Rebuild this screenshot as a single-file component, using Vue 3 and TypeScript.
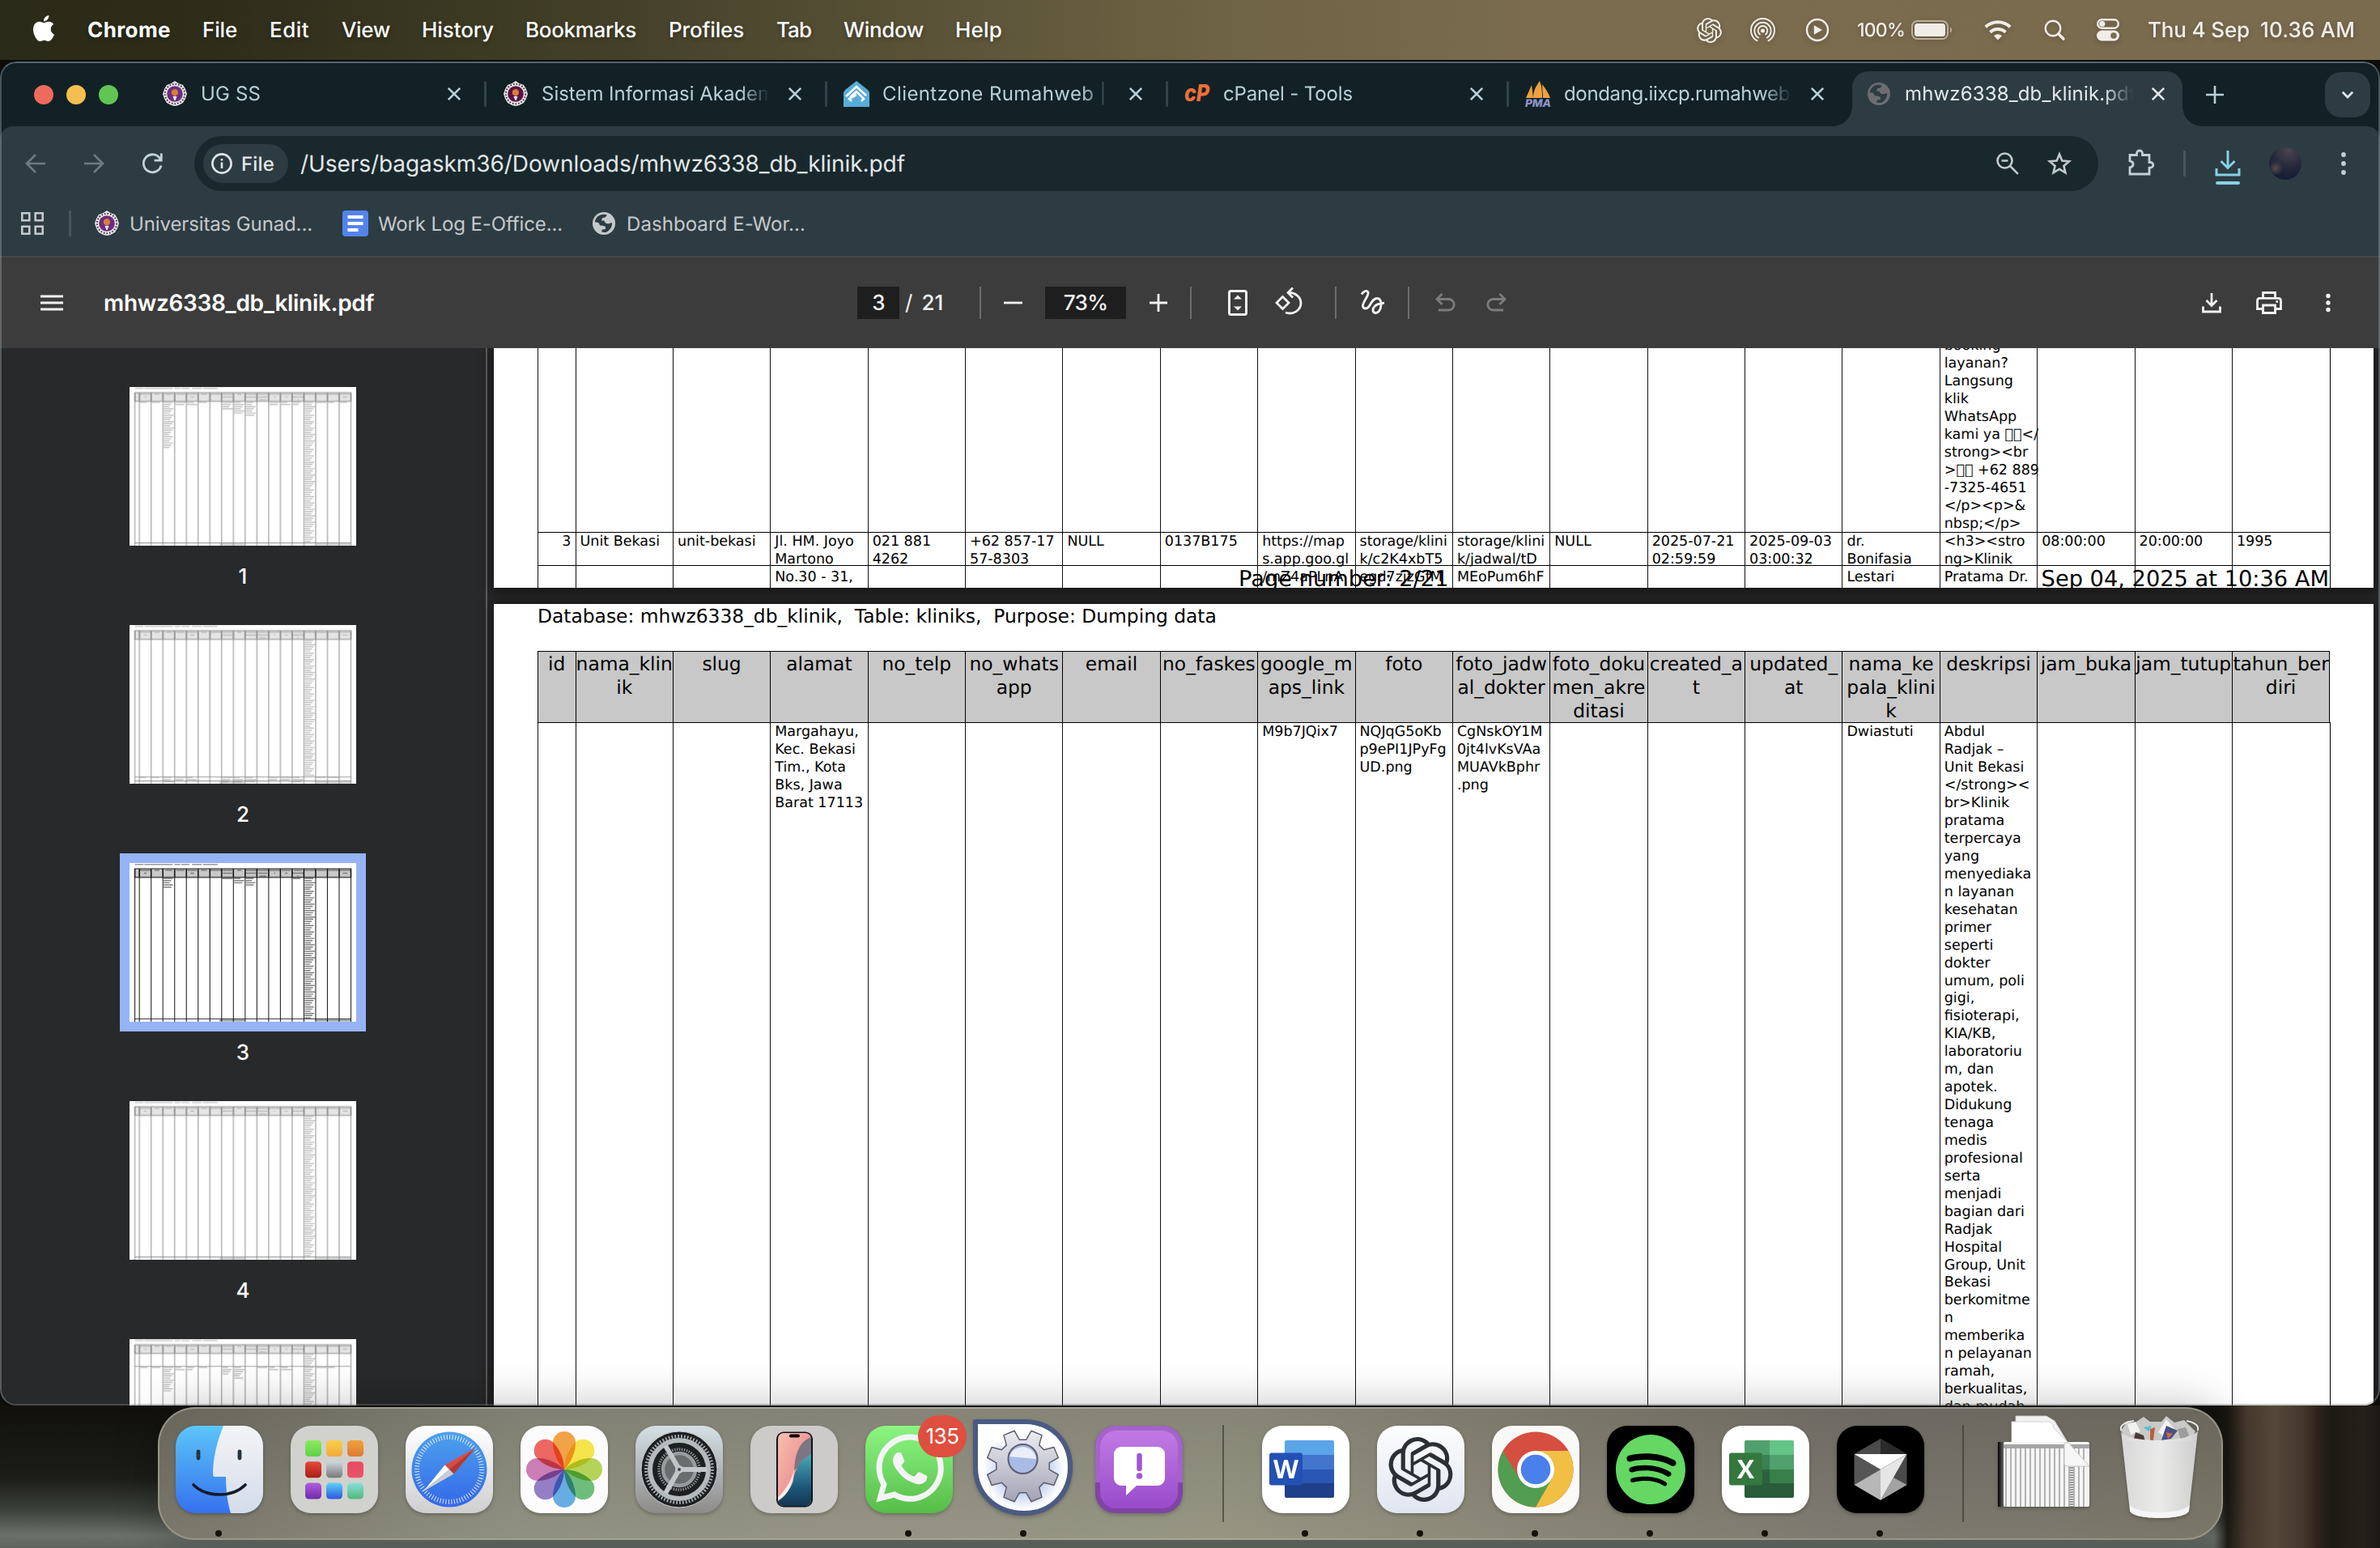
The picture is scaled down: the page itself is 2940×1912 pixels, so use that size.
<script setup lang="ts">
type FitEl = HTMLElement

// Stretches or tightens the tracking of a label so that it takes a given width.
const vFit = {
  mounted(el: FitEl, binding: { value: number }) {
    const n = (el.textContent ?? '').length
    const w = el.getBoundingClientRect().width
    if (n > 0) el.style.letterSpacing = `${((binding.value - w) / n).toFixed(3)}px`
  },
}

const menus = [
  { t: 'Chrome', cell: 142, w: 103 },
  { t: 'File', cell: 83, w: 43 },
  { t: 'Edit', cell: 89, w: 49 },
  { t: 'View', cell: 99, w: 60 },
  { t: 'History', cell: 128, w: 89 },
  { t: 'Bookmarks', cell: 177, w: 137 },
  { t: 'Profiles', cell: 133, w: 93 },
  { t: 'Tab', cell: 83, w: 43 },
  { t: 'Window', cell: 138, w: 99 },
  { t: 'Help', cell: 80, w: 58 },
]

const tabs = [
  { icon: 'ug', t: 'UG SS', w: 74 },
  { icon: 'ug', t: 'Sistem Informasi Akadem', w: 288 },
  { icon: 'rw', t: 'Clientzone Rumahweb | v', w: 298 },
  { icon: 'cp', t: 'cPanel - Tools', w: 160 },
  { icon: 'pma', t: 'dondang.iixcp.rumahweb', w: 279 },
  { icon: 'globe', t: 'mhwz6338_db_klinik.pdf', w: 286, active: true },
]

const bookmarks = [
  { icon: 'ug', t: 'Universitas Gunad...', w: 226, gap: 37 },
  { icon: 'doc', t: 'Work Log E-Office...', w: 228, gap: 35 },
  { icon: 'globe', t: 'Dashboard E-Wor...', w: 221, gap: 0 },
]

const caption = 'Database: mhwz6338_db_klinik,  Table: kliniks,  Purpose: Dumping data'

const headers: string[][] = [
  ['id'], ['nama_klin', 'ik'], ['slug'], ['alamat'], ['no_telp'], ['no_whats', 'app'], ['email'],
  ['no_faskes'], ['google_m', 'aps_link'], ['foto'], ['foto_jadw', 'al_dokter'],
  ['foto_doku', 'men_akre', 'ditasi'], ['created_a', 't'], ['updated_', 'at'],
  ['nama_ke', 'pala_klini', 'k'], ['deskripsi'], ['jam_buka'], ['jam_tutup'], ['tahun_ber', 'diri'],
]

const upperTail = [
  'booking', 'layanan?', 'Langsung', 'klik', 'WhatsApp', 'kami ya \uEEEE\uEEEE</', 'strong><br',
  '>\uEEEE\uEEEE +62 889', '-7325-4651', '</p><p>&', 'nbsp;</p>',
]

const bekasi: string[][] = [
  ['3'], ['Unit Bekasi'], ['unit-bekasi'], ['Jl. HM. Joyo', 'Martono', 'No.30 - 31,'],
  ['021 881', '4262'], ['+62 857-17', '57-8303'], ['NULL'], ['0137B175'],
  ['https://map', 's.app.goo.gl', '/mZ4aPLnA'], ['storage/klini', 'k/c2K4xbT5', 'egd7zjzGfM'],
  ['storage/klini', 'k/jadwal/tD', 'MEoPum6hF'], ['NULL'], ['2025-07-21', '02:59:59'],
  ['2025-09-03', '03:00:32'], ['dr.', 'Bonifasia', 'Lestari'], ['<h3><stro', 'ng>Klinik', 'Pratama Dr.'],
  ['08:00:00'], ['20:00:00'], ['1995'],
]

const story = [
  'Abdul', 'Radjak –', 'Unit Bekasi', '</strong><', 'br>Klinik', 'pratama', 'terpercaya', 'yang',
  'menyediaka', 'n layanan', 'kesehatan', 'primer', 'seperti', 'dokter', 'umum, poli', 'gigi,',
  'fisioterapi,', 'KIA/KB,', 'laboratoriu', 'm, dan', 'apotek.', 'Didukung', 'tenaga', 'medis',
  'profesional', 'serta', 'menjadi', 'bagian dari', 'Radjak', 'Hospital', 'Group, Unit', 'Bekasi',
  'berkomitme', 'n', 'memberika', 'n pelayanan', 'ramah,', 'berkualitas,', 'dan mudah',
]

const rest: string[][] = headers.map(() => [] as string[])
rest[3] = ['Margahayu,', 'Kec. Bekasi', 'Tim., Kota', 'Bks, Jawa', 'Barat 17113']
rest[8] = ['M9b7JQix7']
rest[9] = ['NQJqG5oKb', 'p9ePI1JPyFg', 'UD.png']
rest[10] = ['CgNskOY1M', '0jt4lvKsVAa', 'MUAVkBphr', '.png']
rest[14] = ['Dwiastuti']
rest[15] = story

// Horizontal positions of the column rules on a page.
const rules = [54.5, ...Array.from({ length: 19 }, (_, i) => 101 + i * 120.39)]

// Each thumbnail: extent of word blocks per column, in text lines.
const thumbs = [
  { n: 1, blocks: [[1, 0, 1], [2, 0, 1], [3, 0, 22], [4, 0, 2], [5, 0, 2], [6, 0, 1], [8, 0, 4], [9, 0, 6], [10, 0, 7], [12, 0, 2], [13, 0, 2], [14, 0, 2], [15, 0, 66], [16, 0, 1], [17, 0, 1], [18, 0, 1]], lines: [1596] },
  { n: 2, blocks: [[15, 0, 64], [1, 64, 1], [2, 64, 1], [3, 64, 3], [4, 64, 2], [5, 64, 2], [8, 64, 3], [9, 64, 3], [10, 64, 3], [12, 64, 2], [13, 64, 2], [14, 64, 3], [16, 64, 1], [17, 64, 1]], lines: [1556, 1596] },
  { n: 3, blocks: [[3, 0, 5], [8, 0, 1], [9, 0, 3], [10, 0, 4], [14, 0, 1], [15, 0, 66]], lines: [1596] },
  { n: 4, blocks: [[15, 0, 66]], lines: [1596] },
  { n: 5, blocks: [[15, 0, 66], [1, 6, 1], [2, 6, 1], [3, 6, 12], [4, 6, 2], [5, 6, 2], [6, 6, 1], [8, 6, 4], [9, 6, 6], [11, 6, 1], [12, 6, 2], [13, 6, 2], [16, 6, 1], [17, 6, 1]], lines: [278, 1596] },
]

function dashes(blocks: number[][]): string {
  let d = ''
  for (const [c, from, count] of blocks) {
    for (let i = from; i < from + count; i++) {
      const len = 56 + ((i * 37 + c * 13) % 54)
      d += `M${rules[c] + 7} ${158 + i * 21.93}h${len}`
    }
  }
  return d
}

function gear(cx: number, cy: number, ro: number, ri: number, n: number): string {
  const pts: string[] = []
  const step = (Math.PI * 2) / n
  for (let i = 0; i < n; i++) {
    const a = (i + 0.5) * step
    for (const [f, r] of [[-0.34, ri], [-0.2, ro], [0.2, ro], [0.34, ri]]) {
      pts.push(`${(cx + Math.sin(a + f * step) * r).toFixed(1)} ${(cy - Math.cos(a + f * step) * r).toFixed(1)}`)
    }
  }
  return `M${pts.join('L')}Z`
}

const petals = ['#f19a37', '#f5e13c', '#aed04a', '#63b872', '#5aa5e0', '#8b74c2', '#c773b0', '#ec5b54']
const pads = ['#8ceb5f,#5fd044', '#f8cf4b,#f0ab3c', '#eda23b,#e07a35', '#e44a3b,#a91f17', '#ccd8df,#777777', '#e94a62,#ea5568', '#b15ce0,#6f2ba8', '#5cd0fa,#2c57dc', '#86e0d8,#55b77a']

const openai =
  'M22.2819 9.8211a5.9847 5.9847 0 0 0-.5157-4.9108 6.0462 6.0462 0 0 0-6.5098-2.9A6.0651 6.0651 0 0 0 4.9807 4.1818a5.9847 5.9847 0 0 0-3.9977 2.9 6.0462 6.0462 0 0 0 .7427 7.0966 5.98 5.98 0 0 0 .511 4.9107 6.051 6.051 0 0 0 6.5146 2.9001A5.9847 5.9847 0 0 0 13.2599 24a6.0557 6.0557 0 0 0 5.7718-4.2058 5.9894 5.9894 0 0 0 3.9977-2.9001 6.0557 6.0557 0 0 0-.7475-7.0729zm-9.022 12.6081a4.4755 4.4755 0 0 1-2.8764-1.0408l.1419-.0804 4.7783-2.7582a.7948.7948 0 0 0 .3927-.6813v-6.7369l2.02 1.1686a.071.071 0 0 1 .038.052v5.5826a4.504 4.504 0 0 1-4.4945 4.4944zm-9.6607-4.1254a4.4708 4.4708 0 0 1-.5346-3.0137l.142.0852 4.783 2.7582a.7712.7712 0 0 0 .7806 0l5.8428-3.3685v2.3324a.0804.0804 0 0 1-.0332.0615L9.74 19.9502a4.4992 4.4992 0 0 1-6.1408-1.6464zM2.3408 7.8956a4.485 4.485 0 0 1 2.3655-1.9728V11.6a.7664.7664 0 0 0 .3879.6765l5.8144 3.3543-2.0201 1.1685a.0757.0757 0 0 1-.071 0l-4.8303-2.7865A4.504 4.504 0 0 1 2.3408 7.872zm16.5963 3.8558L13.1038 8.364 15.1192 7.2a.0757.0757 0 0 1 .071 0l4.8303 2.7913a4.4944 4.4944 0 0 1-.6765 8.1042v-5.6772a.79.79 0 0 0-.407-.667zm2.0107-3.0231l-.142-.0852-4.7735-2.7818a.7759.7759 0 0 0-.7854 0L9.409 9.2297V6.8974a.0662.0662 0 0 1 .0284-.0615l4.8303-2.7866a4.4992 4.4992 0 0 1 6.6802 4.66zM8.3065 12.863l-2.02-1.1638a.0804.0804 0 0 1-.038-.0567V6.0742a4.4992 4.4992 0 0 1 7.3757-3.4537l-.142.0805L8.704 5.459a.7948.7948 0 0 0-.3927.6813zm1.0976-2.3654l2.602-1.4998 2.6069 1.4998v2.9994l-2.5974 1.4997-2.6067-1.4997Z'

const dock = [
  { k: 'finder', dot: true }, { k: 'pads' }, { k: 'safari' }, { k: 'photos' }, { k: 'settings' },
  { k: 'phone' }, { k: 'whatsapp', dot: true }, { k: 'gear', dot: true }, { k: 'feedback' },
  { k: 'sep' },
  { k: 'word', dot: true }, { k: 'gpt', dot: true }, { k: 'chrome', dot: true }, { k: 'spotify', dot: true },
  { k: 'excel', dot: true }, { k: 'cursor', dot: true },
  { k: 'sep' },
  { k: 'stack' }, { k: 'trash' },
] as { k: string; dot?: boolean }[]
</script>

<template>
  <div class="desktop">
    <header class="menubar">
      <svg class="apple" viewBox="0 0 24 24"><path fill="#fff" d="M12.152 6.896c-.948 0-2.415-1.078-3.96-1.04-2.04.027-3.91 1.183-4.961 3.014-2.117 3.675-.546 9.103 1.519 12.09 1.013 1.454 2.208 3.09 3.792 3.039 1.52-.065 2.09-.987 3.935-.987 1.831 0 2.35.987 3.96.948 1.637-.026 2.676-1.48 3.676-2.948 1.156-1.688 1.636-3.325 1.662-3.415-.039-.013-3.182-1.221-3.22-4.857-.026-3.04 2.48-4.494 2.597-4.559-1.429-2.09-3.623-2.324-4.39-2.376-2-.156-3.675 1.09-4.61 1.09zM15.53 3.83c.843-1.012 1.4-2.427 1.245-3.83-1.207.052-2.662.805-3.532 1.818-.78.896-1.454 2.338-1.273 3.714 1.338.104 2.715-.688 3.559-1.701" /></svg>
      <nav class="menus">
        <div v-for="m in menus" :key="m.t" class="menu" :style="{ width: m.cell + 'px' }"><span v-fit="m.w">{{ m.t }}</span></div>
      </nav>
      <div class="status">
        <svg class="s-gpt" viewBox="0 0 24 24"><path :d="openai" fill="#f0ede9" /></svg>
        <svg class="s-drop" viewBox="0 0 32 32" fill="none" stroke="#f0ede9" stroke-width="2">
          <path d="M9.5 29.5a15 15 0 1 1 13 0M11.2 25.8a10.5 10.5 0 1 1 9.6 0M13 21.5a6 6 0 1 1 6 0" /><circle cx="16" cy="16.5" r="2.6" fill="#f0ede9" stroke="none" />
        </svg>
        <svg class="s-play" viewBox="0 0 30 30"><circle cx="15" cy="15" r="13" fill="none" stroke="#f0ede9" stroke-width="2.4" /><path d="M10.8 9.2 21 15l-10.2 5.8z" fill="#f0ede9" /></svg>
        <span v-fit="59" class="pct">100%</span>
        <svg class="s-bat" viewBox="0 0 52 24"><rect x="1" y="1" width="44" height="22" rx="6.5" fill="none" stroke="#b9b09f" stroke-width="2" /><rect x="4" y="4" width="38" height="16" rx="3.5" fill="#f0ede9" /><path d="M48 8.500c2.800 1 2.800 6 0 7z" fill="#b9b09f" /></svg>
        <svg class="s-wifi" viewBox="0 0 34 26" fill="none" stroke="#f0ede9"><path d="M1.800 9.300a22 22 0 0 1 30.400 0" stroke-width="4" /><path d="M7.500 15.800a14 14 0 0 1 19 0" stroke-width="4" /><path d="M17 25.500l-5-5.200a7.300 7.300 0 0 1 10 0z" fill="#f0ede9" stroke="none" /></svg>
        <svg class="s-find" viewBox="0 0 26 26" fill="none" stroke="#f0ede9"><circle cx="11" cy="11" r="9.300" stroke-width="2.400" /><path d="M17.800 17.800 24 24" stroke-width="3.400" stroke-linecap="round" /></svg>
        <svg class="s-cc" viewBox="0 0 28 28"><rect x="1.200" y="1.200" width="25.600" height="10.600" rx="5.300" fill="none" stroke="#f0ede9" stroke-width="2.400" /><circle cx="6.800" cy="6.500" r="3.600" fill="#f0ede9" /><rect x="0" y="14.500" width="28" height="13" rx="6.500" fill="#f0ede9" /><circle cx="21" cy="21" r="3.800" fill="#7b6c4f" /></svg>
        <span v-fit="126" class="date">Thu 4 Sep</span>
        <span v-fit="117" class="clock">10.36 AM</span>
      </div>
    </header>

    <main class="window">
      <div class="strip">
        <div class="lights"><i class="red" /><i class="amber" /><i class="green" /></div>
        <div v-for="(t, i) in tabs" :key="i" class="tab" :class="{ active: t.active, plainEnd: i === 4 }">
          <div v-if="t.active" class="tabshape" />
          <span class="fav">
            <svg v-if="t.icon === 'ug'" viewBox="0 0 32 32"><path d="M16 0l4.500 3 5.500 2 3 5 2 6-2 6-3 5-5.500 3L16 31l-4.500-1L6 27l-3-5-2-6 2-6 3-5 5.500-2z" fill="#e9e4e6" /><circle cx="16" cy="16" r="12.200" fill="none" stroke="#44343f" stroke-width="2" stroke-dasharray="1.600 2" /><circle cx="16" cy="16" r="9.800" :fill="i === 1 ? '#5b1046' : '#6a2c82'" /><path d="M12.500 17c-2-4 .5-7 3.500-7s5 3 3.500 6.500l-3 2.500z" fill="#d97f35" /><path d="M13.500 19h5l-1.800 5h-1.400z" fill="#f3eef2" /></svg>
            <svg v-else-if="t.icon === 'rw'" viewBox="0 0 32 32"><path d="M16 0l14 11 2 3v18H0V14l2-3z" fill="#57acd9" /><path d="M3 19 16 7l12 11M8 20l8-7 9 9-3 3M10 25l-3-3 9-5" fill="none" stroke="#fff" stroke-width="2.600" /></svg>
            <svg v-else-if="t.icon === 'cp'" viewBox="0 0 32 32"><text x="0" y="25" textLength="31" lengthAdjust="spacingAndGlyphs" class="cp">cP</text></svg>
            <svg v-else-if="t.icon === 'pma'" viewBox="0 0 32 32"><path d="M8 5 1 21h9zM18 0c-6 8-8 14-8 21h11c0-7 0-14-3-21zM21 4c4 5 8 11 10 17h-9z" fill="#eda03f" /><text x="0" y="32" textLength="32" lengthAdjust="spacingAndGlyphs" class="pma">PMA</text></svg>
            <svg v-else viewBox="0 0 28 28" class="gl"><circle cx="14" cy="14" r="14" fill="#6b6d70" /><path d="M2.800 12.500C3.500 6.500 8 2.800 14 2.800l4 .8-2 2.600-4 1-1 3.200h3l2 3 3 1 5-1.500c.8 5-3 10.500-8 12l-5-.4 1-3 4-.5v-3l-4-1.500h-3l-1-2.500-2-1.500z" fill="#2d3c43" /></svg>
          </span>
          <span class="label"><span v-fit="t.w">{{ t.t }}</span></span>
          <svg class="x" viewBox="0 0 18 18"><path d="M1.800 1.800l14.400 14.400M16.200 1.800 1.800 16.200" stroke-width="2.600" fill="none" /></svg>
        </div>
        <svg class="plus" viewBox="0 0 22 22"><path d="M11 0v22M0 11h22" stroke="#b8d0d8" stroke-width="2.600" /></svg>
        <div class="more"><svg viewBox="0 0 18 12"><path d="M2 2l7 7 7-7" fill="none" stroke="#dfe7ea" stroke-width="3" /></svg></div>
      </div>

      <div class="chrome">
        <div class="nav">
          <svg class="n-back" viewBox="0 0 28 28" fill="none" stroke="#6d7c83" stroke-width="2.600"><path d="M26 14H3M14 3 3 14l11 11" /></svg>
          <svg class="n-fwd" viewBox="0 0 28 28" fill="none" stroke="#6d7c83" stroke-width="2.600"><path d="M2 14h23M14 3l11 11-11 11" /></svg>
          <svg class="n-re" viewBox="0 0 28 28" fill="none" stroke="#c1d3d9" stroke-width="2.800"><path d="M24 8.500A11 11 0 1 0 25 16.500M25.300 1.500v8.700h-8.700" /></svg>
          <div class="omni">
            <div class="chip">
              <svg viewBox="0 0 26 26"><circle cx="13" cy="13" r="11.600" fill="none" stroke="#dfe5e8" stroke-width="2.600" /><path d="M13 11.500v7.500M13 7v2.600" stroke="#dfe5e8" stroke-width="2.600" /></svg>
              <span v-fit="41">File</span>
            </div>
            <span v-fit="747" class="url">/Users/bagaskm36/Downloads/mhwz6338_db_klinik.pdf</span>
            <svg class="o-zoom" viewBox="0 0 28 28" fill="none" stroke="#c3c8cc" stroke-width="2.600"><circle cx="10.500" cy="10.500" r="9" /><path d="M6.500 10.500h8M17 17l9.800 9.800" /></svg>
            <svg class="o-star" viewBox="0 0 30 30" fill="none" stroke="#c3c8cc" stroke-width="2.600"><path d="M15 3.500l3.300 8 8.700.700-6.600 5.700 2 8.400-7.400-4.500-7.400 4.500 2-8.400L3 12.200l8.700-.700z" /></svg>
          </div>
          <svg class="n-ext" viewBox="0 0 34 34" fill="none" stroke="#c1d0d6" stroke-width="2.800"><path d="M3 8.500h8.500v-2a3.500 3.500 0 0 1 7 0v2H27v9h1.500a3.300 3.300 0 0 1 0 6.600H27V32H3v-8.200c5.500-1 5.500-7 0-8z" /></svg>
          <i class="n-sep" />
          <svg class="n-dl" viewBox="0 0 32 42" fill="none" stroke="#86d1e4" stroke-width="3"><path d="M16 0v21M7.500 13 16 21.500 24.500 13M2 22v8h28v-8" /><path d="M3 40h26" stroke-width="4" stroke-linecap="round" /></svg>
          <i class="avatar" />
          <svg class="n-dots" viewBox="0 0 6 28" fill="#c1d0d6"><circle cx="3" cy="3" r="2.900" /><circle cx="3" cy="14" r="2.900" /><circle cx="3" cy="25" r="2.900" /></svg>
        </div>
        <div class="marks">
          <svg class="apps" viewBox="0 0 28 28" fill="none" stroke="#c5c9cc" stroke-width="2.600"><path d="M1.300 1.300h9v9h-9zM17.700 1.300h9v9h-9zM1.300 17.700h9v9h-9zM17.700 17.700h9v9h-9z" /></svg>
          <i class="m-sep" />
          <div v-for="b in bookmarks" :key="b.t" class="mark" :style="{ marginRight: b.gap + 'px' }">
            <svg v-if="b.icon === 'ug'" viewBox="0 0 32 32"><path d="M16 0l4.500 3 5.500 2 3 5 2 6-2 6-3 5-5.500 3L16 31l-4.500-1L6 27l-3-5-2-6 2-6 3-5 5.500-2z" fill="#e9e4e6" /><circle cx="16" cy="16" r="12.200" fill="none" stroke="#44343f" stroke-width="2" stroke-dasharray="1.600 2" /><circle cx="16" cy="16" r="9.800" fill="#6a2c82" /><path d="M12.500 17c-2-4 .5-7 3.500-7s5 3 3.500 6.500l-3 2.500z" fill="#d97f35" /><path d="M13.500 19h5l-1.800 5h-1.400z" fill="#f3eef2" /></svg>
            <svg v-else-if="b.icon === 'doc'" viewBox="0 0 32 32"><rect width="32" height="32" rx="4" fill="#5383ec" /><path d="M6.500 8h19M6.500 16h19M6.500 24h13" stroke="#fff" stroke-width="4" /></svg>
            <svg v-else viewBox="-2 -2 32 32"><circle cx="14" cy="14" r="14" fill="#c5c9cc" /><path d="M2.800 12.500C3.500 6.500 8 2.800 14 2.800l4 .8-2 2.600-4 1-1 3.200h3l2 3 3 1 5-1.500c.8 5-3 10.500-8 12l-5-.4 1-3 4-.5v-3l-4-1.500h-3l-1-2.500-2-1.500z" fill="#2d3c43" /></svg>
            <span v-fit="b.w">{{ b.t }}</span>
          </div>
        </div>
      </div>

      <div class="pdfbar">
        <div class="lead">
          <svg viewBox="0 0 28 20"><path d="M0 2h28M0 10h28M0 18h28" stroke="#f1f1f1" stroke-width="2.800" /></svg>
          <span v-fit="334">mhwz6338_db_klinik.pdf</span>
        </div>
        <span class="field page">3</span>
        <span class="of">/<b>21</b></span>
        <i class="vr" />
        <svg class="step" viewBox="0 0 79 48"><path d="M28 24h23" stroke="#f1f1f1" stroke-width="2.800" /></svg>
        <span class="field zoom">73%</span>
        <svg class="step" viewBox="0 0 79 48"><path d="M29 24h22M40 13v22" stroke="#f1f1f1" stroke-width="2.800" /></svg>
        <i class="vr" />
        <svg class="tool fit" viewBox="0 0 48 48"><rect x="13.500" y="9.500" width="21" height="29" rx="2" fill="none" stroke="#f1f1f1" stroke-width="3" /><path d="M19 19.500h10l-5-5zM19 28.500h10l-5 5z" fill="#f1f1f1" /></svg>
        <svg class="tool rot" viewBox="0 0 48 48" fill="none" stroke="#f1f1f1" stroke-width="2.800"><path d="M16.500 16.500 24 24l-7.500 7.500L9 24zM23.500 11.500c8-.500 15.500 5 15.500 13s-9 15-19 11.500M29 5.500l-6 6 6 6" /></svg>
        <i class="vr v2" />
        <svg class="tool pen" viewBox="0 0 48 48" fill="none" stroke="#f1f1f1" stroke-width="2.900"><path d="M11 13.500c2-4 7-5.500 8-2.500 1.500 4-7 12-6.500 17 .5 4 5.500 4 8 0 3-5 5-9.500 9.500-9.500 4 0 5.500 4 5 8.500-.5 6-3.500 10-7 9.500-3.500-.5-4-4.500-1.500-7.500s6-4.500 12.500-4.700" /></svg>
        <i class="vr v3" />
        <svg class="tool un" viewBox="0 0 48 48" fill="none" stroke="#7c7c7c" stroke-width="2.800"><path d="M16 33h12.500a6.500 6.500 0 0 0 0-13.500H14M20.500 13 14 19.500l6.500 6.500" /></svg>
        <svg class="tool re" viewBox="0 0 48 48" fill="none" stroke="#7c7c7c" stroke-width="2.800"><path d="M32 33H19.500a6.500 6.500 0 0 1 0-13.500H34M27.500 13l6.500 6.500-6.500 6.500" /></svg>
        <svg class="tool dl" viewBox="0 0 48 48" fill="none" stroke="#f1f1f1" stroke-width="2.800"><path d="M24 12v15M17.500 21l6.500 6.500 6.500-6.500M13.500 28.500v6.500h21v-6.500" /></svg>
        <svg class="tool pr" viewBox="0 0 48 48" fill="none" stroke="#f1f1f1" stroke-width="2.800"><path d="M16.500 18v-6.500h15V18M16 31.500h-6.500V21.500c0-2 1-3.200 3-3.200h23c2 0 3 1.200 3 3.200v10H32M16.500 27h15v9.500h-15z" /><path d="M32.500 22.500h2.600" /></svg>
        <svg class="tool dt" viewBox="0 0 48 48" fill="#f1f1f1"><circle cx="24" cy="15.500" r="2.700" /><circle cx="24" cy="24" r="2.700" /><circle cx="24" cy="32.500" r="2.700" /></svg>
      </div>

      <div class="body">
        <aside class="side">
          <div v-for="t in thumbs" :key="t.n" class="thumb" :class="{ on: t.n === 3 }">
            <div class="frame">
              <svg viewBox="0 0 2322 1625">
                <rect width="2322" height="1625" fill="#fff" />
                <g :opacity="t.n === 3 ? 1 : 0.5">
                  <rect x="54.500" y="58" width="2213.500" height="88" fill="#c8c8c8" />
                  <path d="M54 14h90M152 14h290M460 14h60M530 14h86M640 14h100M752 14h150" stroke="#000" stroke-width="13" opacity=".4" />
                  <path v-for="(h, c) in headers.slice(1)" :key="c" :d="h.map((s, k) => `M${rules[c + 1] + 60 - s.length * 6} ${74 + k * 29}h${s.length * 12}`).join('')" stroke="#000" stroke-width="12" opacity=".38" />
                  <path :d="rules.map((x) => `M${x} 58V1625`).join('')" stroke="#000" stroke-width="9" opacity=".85" />
                  <path :d="rules.map((x) => `M${x} 58V146`).join('') + 'M50 58H2272M50 146H2272'" stroke="#000" stroke-width="14" opacity=".6" />
                  <path :d="t.lines.map((y) => `M54 ${y}H2268`).join('')" stroke="#000" stroke-width="9" opacity=".75" />
                  <path :d="dashes(t.blocks)" stroke="#000" stroke-width="12" opacity=".5" />
                  <path d="M920 1612h260M1910 1612h356" stroke="#000" stroke-width="18" opacity=".4" />
                </g>
              </svg>
            </div>
            <span class="num">{{ t.n }}</span>
          </div>
        </aside>
        <div class="pages">
          <section class="sheet upper">
            <div class="grid">
              <div v-for="(_, c) in headers" :key="c" class="cell tail"><template v-if="c === 15"><div v-for="l in upperTail" :key="l" class="ln">{{ l }}</div></template></div>
            </div>
            <div class="grid first">
              <div v-for="(cell, c) in bekasi" :key="c" class="cell" :class="{ right: c === 0 }">{{ cell.join('\n') }}</div>
            </div>
            <div class="grid cont">
              <div v-for="(_, c) in headers" :key="c" class="cell" />
            </div>
            <span class="foot mid">Page number: 2/21</span>
            <span class="foot end">Sep 04, 2025 at 10:36 AM</span>
          </section>
          <section class="sheet lower">
            <p class="caption">{{ caption }}</p>
            <div class="grid head">
              <div v-for="(h, c) in headers" :key="c" class="cell">{{ h.join('\n') }}</div>
            </div>
            <div class="grid long">
              <div v-for="(cell, c) in rest" :key="c" class="cell">{{ cell.join('\n') }}</div>
            </div>
          </section>
        </div>
      </div>
    </main>

    <footer class="dock">
      <template v-for="(d, i) in dock" :key="i">
        <i v-if="d.k === 'sep'" class="dsep" />
        <div v-else class="app" :class="{ running: d.dot }">
          <svg v-if="d.k === 'finder'" viewBox="0 0 108 108">
            <defs><linearGradient id="fa" x2="0" y2="1"><stop stop-color="#5cc5f8" /><stop offset="1" stop-color="#3571ef" /></linearGradient><linearGradient id="fb" x2="0" y2="1"><stop stop-color="#f4f4f6" /><stop offset="1" stop-color="#d3dcea" /></linearGradient><clipPath id="rr"><rect width="108" height="108" rx="25" /></clipPath></defs>
            <g clip-path="url(#rr)"><rect width="108" height="108" fill="url(#fa)" /><path d="M59 0C50 22 46 42 46 60q0 3 3 3h13c0 16 2 32 6 45h40V0z" fill="url(#fb)" /></g>
            <path d="M28 32v8M79 32v8" stroke="#26343f" stroke-width="4.800" stroke-linecap="round" /><path d="M22 73c16 16 48 16 64 0" fill="none" stroke="#141c2c" stroke-width="3.600" stroke-linecap="round" />
          </svg>
          <svg v-else-if="d.k === 'pads'" viewBox="0 0 108 108">
            <rect width="108" height="108" rx="25" fill="#d1d1ce" />
            <template v-for="(p, k) in pads" :key="k">
              <linearGradient :id="'pad' + k" x2="0" y2="1"><stop :stop-color="p.split(',')[0]" /><stop offset="1" :stop-color="p.split(',')[1]" /></linearGradient>
              <rect :x="18 + (k % 3) * 26" :y="18 + Math.floor(k / 3) * 26.300" width="20" height="20" rx="4.500" :fill="`url(#pad${k})`" />
            </template>
          </svg>
          <svg v-else-if="d.k === 'safari'" viewBox="0 0 108 108">
            <defs><linearGradient id="sf" x2="0" y2="1"><stop stop-color="#fff" /><stop offset="1" stop-color="#cfcfcf" /></linearGradient><linearGradient id="sg" x2="0" y2="1"><stop stop-color="#4da1ec" /><stop offset="1" stop-color="#3468ea" /></linearGradient></defs>
            <rect width="108" height="108" rx="25" fill="url(#sf)" /><circle cx="54" cy="54" r="46.500" fill="url(#sg)" />
            <circle cx="54" cy="54" r="40" fill="none" stroke="#fff" stroke-width="6" stroke-dasharray="1 2.490" opacity=".85" />
            <path d="M87 27 48.500 48.500 54 54z" fill="#dd4a3e" /><path d="M87 27 59.500 59.500 54 54z" fill="#b33a31" /><path d="M22 81 48.500 48.500 54 54z" fill="#fff" /><path d="M22 81 59.500 59.500 54 54z" fill="#c9ced6" />
          </svg>
          <svg v-else-if="d.k === 'photos'" viewBox="0 0 108 108">
            <rect width="108" height="108" rx="25" fill="#fcfcfc" />
            <g class="flower"><path v-for="(c, k) in petals" :key="k" d="M54 54C46 46 40 33 40 21a14 14 0 0 1 28 0C68 33 62 46 54 54z" :fill="c" :transform="`rotate(${k * 45} 54 54)`" class="petal" /></g>
          </svg>
          <svg v-else-if="d.k === 'settings'" viewBox="0 0 108 108">
            <defs><linearGradient id="st" x2="0" y2="1"><stop stop-color="#d5e0e6" /><stop offset="1" stop-color="#8d8b89" /></linearGradient></defs>
            <rect width="108" height="108" rx="25" fill="url(#st)" /><circle cx="54" cy="54" r="47" fill="#1d1f20" />
            <circle cx="54" cy="54" r="41" fill="none" stroke="#a7adb0" stroke-width="4" stroke-dasharray="1.800 2.100" /><circle cx="54" cy="54" r="36" fill="none" stroke="#b5babd" stroke-width="6" />
            <circle cx="54" cy="54" r="25" fill="none" stroke="#8c9092" stroke-width="3.500" stroke-dasharray="1.500 1.500" /><circle cx="54" cy="54" r="20" fill="#6a6d6e" stroke="#989c9e" stroke-width="4.500" />
            <path d="M54 54h34M54 54 37 24.500M54 54 37 83.500" stroke="#c2c6c9" stroke-width="6" /><circle cx="54" cy="54" r="5" fill="#c2c6c9" /><circle cx="54" cy="54" r="2" fill="#44474a" />
            <circle cx="54" cy="54" r="47" fill="none" stroke="#c9cfd2" stroke-width="1" />
          </svg>
          <svg v-else-if="d.k === 'phone'" viewBox="0 0 108 108">
            <defs><linearGradient id="pa" x2="1" y2="1"><stop stop-color="#f7c0b0" /><stop offset=".5" stop-color="#ef9a98" /><stop offset="1" stop-color="#fbe6e2" /></linearGradient><linearGradient id="pb" x2="0" y2="1"><stop stop-color="#4ba8b8" /><stop offset=".6" stop-color="#1d5a7c" /><stop offset="1" stop-color="#12324c" /></linearGradient><clipPath id="pc"><rect x="34" y="9" width="41" height="90" rx="7" /></clipPath></defs>
            <rect width="108" height="108" rx="25" fill="#cccbc9" /><rect x="32" y="7.500" width="45" height="93" rx="9" fill="#101316" />
            <g clip-path="url(#pc)"><rect x="34" y="9" width="41" height="90" fill="url(#pa)" /><path d="M75 14C60 20 55 35 54 55l21-16z" fill="#7b7584" /><path d="M75 35C62 42 54 55 53 68 50 78 40 90 34 91v10h41z" fill="url(#pb)" /><path d="M54 52c-2 14-10 26-20 37v4c14-9 19-22 20-41z" fill="#fff" opacity=".8" /></g>
            <rect x="48" y="10.500" width="13" height="4" rx="2" fill="#000" />
          </svg>
          <template v-else-if="d.k === 'whatsapp'">
            <svg viewBox="0 0 108 108">
              <defs><linearGradient id="wa" x2="0" y2="1"><stop stop-color="#8cf582" /><stop offset="1" stop-color="#57bd49" /></linearGradient></defs>
              <rect width="108" height="108" rx="25" fill="url(#wa)" /><g transform="translate(13 10.500) scale(3.500)"><path fill="#f4f4f6" d="M17.472 14.382c-.297-.149-1.758-.867-2.030-.967-.273-.099-.471-.148-.670.150-.197.297-.767.966-.940 1.164-.173.199-.347.223-.644.075-.297-.150-1.255-.463-2.390-1.475-.883-.788-1.480-1.761-1.653-2.059-.173-.297-.018-.458.130-.606.134-.133.298-.347.446-.520.149-.174.198-.298.298-.497.099-.198.050-.371-.025-.520-.075-.149-.669-1.612-.916-2.207-.242-.579-.487-.500-.669-.510-.173-.008-.371-.010-.570-.010-.198 0-.520.074-.792.372-.272.297-1.040 1.016-1.040 2.479 0 1.462 1.065 2.875 1.213 3.074.149.198 2.096 3.200 5.077 4.487.709.306 1.262.489 1.694.625.712.227 1.360.195 1.871.118.571-.085 1.758-.719 2.006-1.413.248-.694.248-1.289.173-1.413-.074-.124-.272-.198-.570-.347m-5.421 7.403h-.004a9.870 9.870 0 01-5.031-1.378l-.361-.214-3.741.982.998-3.648-.235-.374a9.860 9.860 0 01-1.510-5.260c.001-5.450 4.436-9.884 9.888-9.884 2.640 0 5.122 1.030 6.988 2.898a9.825 9.825 0 012.893 6.994c-.003 5.450-4.437 9.884-9.885 9.884m8.413-18.297A11.815 11.815 0 0012.050 0C5.495 0 .160 5.335.157 11.892c0 2.096.547 4.142 1.588 5.945L.057 24l6.305-1.654a11.882 11.882 0 005.683 1.448h.005c6.554 0 11.890-5.335 11.893-11.893a11.821 11.821 0 00-3.480-8.413z" /></g>
            </svg>
            <span class="badge">135</span>
          </template>
          <svg v-else-if="d.k === 'gear'" viewBox="0 0 108 108" class="over">
            <defs><linearGradient id="ga" x2="0" y2="1"><stop stop-color="#ececf2" /><stop offset="1" stop-color="#a3a3b6" /></linearGradient><radialGradient id="gb"><stop offset=".4" stop-color="#a9bfe8" /><stop offset="1" stop-color="#fff" /></radialGradient></defs>
            <path d="M-6-5h60c34 0 57 24 57 56S88 108 54 108-6 85-6 51z" fill="#fff" stroke="#4a5a82" stroke-width="6" stroke-linejoin="round" />
            <circle cx="54" cy="54" r="50" fill="url(#gb)" /><path d="M4-1C16 28 56 44 107 43 103 17 82-2 54-2z" fill="#fff" />
            <path :d="gear(52.500, 50, 45, 33, 8)" fill="url(#ga)" stroke="#5d5d72" stroke-width="1.500" stroke-linejoin="round" /><circle cx="52.500" cy="41" r="18" fill="#a9bce6" stroke="#5d5d72" stroke-width="2" /><path d="M36 38a17 17 0 0 1 33 3z" fill="#fff" opacity=".75" />
          </svg>
          <svg v-else-if="d.k === 'feedback'" viewBox="0 0 108 108">
            <defs><linearGradient id="fe" x2="0" y2="1"><stop stop-color="#c17ae4" /><stop offset="1" stop-color="#994bca" /></linearGradient></defs>
            <rect width="108" height="108" rx="25" fill="#7f44a6" /><path d="M0 70V25A25 25 0 0 1 25 0h58a25 25 0 0 1 25 25v45z" fill="#a463c8" /><rect x="6" y="6" width="96" height="96" rx="20" fill="url(#fe)" />
            <path d="M32 26h45a9 9 0 0 1 9 9v30a9 9 0 0 1-9 9H51L38 86V74h-6a9 9 0 0 1-9-9V35a9 9 0 0 1 9-9z" fill="#fff" /><path d="M54.500 37v16" stroke="#a156d2" stroke-width="6.500" stroke-linecap="round" /><circle cx="54.500" cy="62" r="3.800" fill="#a156d2" />
          </svg>
          <svg v-else-if="d.k === 'word'" viewBox="0 0 108 108">
            <rect width="108" height="108" rx="25" fill="#fff" /><path d="M28 36V20q0-2 2-2h57q2 0 2 2v16z" fill="#5ba4e8" /><path d="M28 36h61v18H28z" fill="#4276cc" /><path d="M28 54h61v17H28z" fill="#2a57b6" /><path d="M28 71h61v16q0 2-2 2H30q-2 0-2-2z" fill="#1f3f88" />
            <rect x="9" y="33.500" width="41" height="40" rx="3" fill="#2350b4" /><text x="29.500" y="65" class="off">W</text>
          </svg>
          <svg v-else-if="d.k === 'gpt'" viewBox="0 0 108 108">
            <defs><linearGradient id="gp" x2="0" y2="1"><stop stop-color="#fdfdfe" /><stop offset="1" stop-color="#dfe5f0" /></linearGradient></defs>
            <rect width="108" height="108" rx="25" fill="url(#gp)" /><path :d="openai" transform="translate(14 14) scale(3.330)" fill="#2b3036" />
          </svg>
          <svg v-else-if="d.k === 'chrome'" viewBox="0 0 108 108">
            <rect width="108" height="108" rx="25" fill="#f9f9f8" /><circle cx="54" cy="54" r="46.500" fill="#d64e40" />
            <path d="M13.600 31 34 65.500 54 70 74 65.500 54 100.500A46.500 46.500 0 0 1 13.600 31z" fill="#519d52" /><path d="M54 31h40.400A46.500 46.500 0 0 1 54 100.500L74 65.500z" fill="#f1bf43" /><circle cx="54" cy="54" r="23" fill="#fff" /><circle cx="54" cy="54" r="18.300" fill="#4a80ea" />
          </svg>
          <svg v-else-if="d.k === 'spotify'" viewBox="0 0 108 108">
            <rect width="108" height="108" rx="25" fill="#000" /><path transform="translate(11 11) scale(3.583)" fill="#64d862" d="M12 0C5.400 0 0 5.400 0 12s5.400 12 12 12 12-5.400 12-12S18.660 0 12 0zm5.521 17.340c-.240.359-.660.480-1.021.240-2.820-1.740-6.360-2.101-10.561-1.141-.418.122-.779-.179-.899-.539-.120-.421.180-.780.540-.900 4.560-1.021 8.520-.600 11.640 1.320.420.180.479.659.301 1.020zm1.440-3.300c-.301.420-.841.600-1.262.300-3.239-1.980-8.159-2.580-11.939-1.380-.479.120-1.020-.120-1.140-.600-.120-.480.120-1.021.600-1.141C9.600 9.900 15 10.561 18.720 12.840c.361.181.540.780.241 1.200zm.120-3.360C15.240 8.400 8.820 8.160 5.160 9.301c-.600.179-1.200-.181-1.380-.721-.180-.601.180-1.200.720-1.381 4.260-1.260 11.280-1.020 15.721 1.621.539.300.719 1.020.419 1.560-.299.421-1.020.599-1.559.300z" />
          </svg>
          <svg v-else-if="d.k === 'excel'" viewBox="0 0 108 108">
            <rect width="108" height="108" rx="25" fill="#fff" /><path d="M28 36V20q0-2 2-2h29v18z" fill="#4fa06c" /><path d="M59 18h28q2 0 2 2v16H59z" fill="#64c488" /><path d="M28 36h31v18H28z" fill="#3a8052" /><path d="M59 36h30v18H59z" fill="#4fa06c" /><path d="M28 54h31v17H28z" fill="#2c6240" /><path d="M59 54h30v17H59z" fill="#387f4b" /><path d="M28 71h61v16q0 2-2 2H30q-2 0-2-2z" fill="#2b5c39" />
            <rect x="9" y="33.500" width="41" height="40" rx="3" fill="#35783f" /><text x="29.500" y="65" class="off">X</text>
          </svg>
          <svg v-else-if="d.k === 'cursor'" viewBox="0 0 108 108">
            <rect width="108" height="108" rx="25" fill="#000" /><path d="M54 16 21.500 35h65z" fill="#4b4b4b" /><path d="M54 16v19h32.500z" fill="#2a2a2a" /><path d="M21.500 35 54 54 21.500 73z" fill="#565656" /><path d="M21.500 73 54 54v38z" fill="#b7b7b7" /><path d="M86.500 35v38L54 92z" fill="#4a4a4a" /><path d="M86.500 73 54 92l16-28z" fill="#a2a2a2" /><path d="M21.500 35h65L54 54z" fill="#fff" /><path d="M86.500 35 54 92V54z" fill="#e6e6e6" />
          </svg>
          <svg v-else-if="d.k === 'stack'" viewBox="0 0 108 108" class="over">
            <defs><linearGradient id="sk"><stop stop-color="#000" /><stop offset="1" stop-color="#777" /></linearGradient></defs>
            <path d="M15-12h38l10 6 17 28v16H15z" fill="#f2f2f2" stroke="#ccc" /><path d="M10-5h45q6 0 7 8l18 18v10H10z" fill="#fff" stroke="#d5d5d5" />
            <rect x="-7" y="20" width="8" height="80" fill="url(#sk)" /><rect x="0" y="20" width="106" height="80" rx="2" fill="#f5f5f5" /><path d="M0 23h106v5H0z" fill="#a5a5a5" /><path d="M3 28v72M9 28v72M15 28v72M21 28v72M27 28v72M33 28v72M39 28v72M45 28v72M51 28v72M57 28v72M63 28v72M69 28v72M75 28v72M81 28v72M87 28v72M93 28v72M99 28v72" stroke="#888" stroke-width="1.200" /><path d="M84 30v70" stroke="#999" stroke-width="4" stroke-dasharray="2 1" /><path d="M80 21 106 50H80q-5 0-5-4V21z" fill="#f7f7f7" stroke="#c5c5c5" />
          </svg>
          <svg v-else viewBox="0 0 108 108" class="over bin">
            <defs><linearGradient id="tr"><stop stop-color="#dcdcdc" /><stop offset=".5" stop-color="#efefef" /><stop offset="1" stop-color="#d2d2d2" /></linearGradient></defs>
            <path d="M6 6 14-6l8 3 12-8 8 6 14 0 6-7 10 8 12-3 14 14-6 12H14z" fill="#c9c9c7" /><path d="M14-2l10-3 6 12-12 4zM62-8l12 14-14 8-8-6z" fill="#f2f2f0" /><path d="M34 2l10-2-4 7z" fill="#4ec0e0" /><path d="M62 0l14 6-8 10-12 2z" fill="#4a4f86" /><path d="M62 8l8 2-6 6z" fill="#d06a34" /><path d="M24 8l10 4 2 8-14-4z" fill="#4b3a3a" /><path d="M42 4l6-2-2 16-4 1z" fill="#b8603a" /><path d="M76 4l10-2 4 10-10 6z" fill="#9c9c9a" />
            <path d="M6 6c2 16 86 16 95 0l-11 99c-3 12-70 12-73 0z" fill="url(#tr)" opacity=".97" /><path d="M17 98c10 12 62 12 74 0l-1 7c-3 12-70 12-73 0z" fill="#fafafa" opacity=".8" />
            <path d="M6 6C4-2 14-5 22-6M101 6c2-8-8-11-14-12" fill="none" stroke="#e8e8e8" stroke-width="2" />
          </svg>
        </div>
      </template>
    </footer>
  </div>
</template>

<style>
html,
body {
  margin: 0;
  background: #0d0c09;
}
</style>

<style scoped>
.desktop {
  position: relative;
  width: 2940px;
  height: 1912px;
  overflow: hidden;
  display: flex;
  flex-direction: column;
  font-family: Inter, 'Liberation Sans', sans-serif;
  text-rendering: geometricPrecision;
  background:
    linear-gradient(90deg, transparent 0 2735px, rgba(25, 24, 17, 0.95) 2752px, #46392d 2775px, #54483a 2810px, #43372c 2845px, #30231d 2862px, #1d1a14 2880px, #25201a 2920px, #1b1813) 0 1736px / 100% 176px no-repeat,
    linear-gradient(180deg, #11100c 0, #1c1d18 90px, #3d423c 130px, #6b7169 160px, #60665f) 0 1736px / 100% 176px no-repeat,
    #0d0c09;
}
.desktop svg { display: block; flex: none; overflow: visible; }
i { display: block; flex: none; }

.menubar {
  height: 74px;
  margin-bottom: 2px;
  display: flex;
  align-items: center;
  box-sizing: border-box;
  padding: 0 31px 0 38px;
  background: linear-gradient(90deg, #292a17 0, #2e2d1a 260px, #444028 760px, #5f573b 1240px, #6e6344 1500px, #7b6c4f 1900px, #7a6a4e);
  color: #fff;
  font-size: 26px;
  font-weight: 500;
}
.apple { width: 32px; height: 32px; margin-top: -5px; }
.menus { display: flex; margin-left: 38px; }
.menu { white-space: nowrap; text-shadow: 0 2px 5px rgba(0, 0, 0, 0.35); }
.menu:first-child { font-weight: 700; }
.status { display: flex; align-items: center; margin-left: auto; color: #f0ede9; white-space: nowrap; filter: drop-shadow(0 2px 3px rgba(0, 0, 0, 0.2)); }
.s-gpt { width: 31px; height: 31px; margin-right: 35px; }
.s-drop { width: 31px; height: 31px; margin-right: 37px; }
.s-play { width: 30px; height: 30px; margin-right: 34px; }
.pct { font-size: 23px; margin-right: 8px; }
.s-bat { width: 52px; height: 24px; margin-right: 38px; }
.s-wifi { width: 34px; height: 26px; margin-right: 40px; }
.s-find { width: 26px; height: 26px; margin-right: 39px; }
.s-cc { width: 28px; height: 28px; margin-right: 35px; }
.date { margin-right: 13px; }

.window {
  position: relative;
  height: 1660px;
  flex: none;
  display: flex;
  flex-direction: column;
  overflow: hidden;
  border-radius: 20px;
  background: #112126;
}
.window::after {
  content: '';
  position: absolute;
  inset: 0;
  border: 2px solid rgba(160, 175, 180, 0.38);
  border-top-color: #566670;
  border-bottom-color: rgba(120, 125, 128, 0.4);
  border-radius: 20px;
}
.strip { height: 80px; display: flex; align-items: center; padding-top: 2px; box-sizing: border-box; flex: none; }
.lights { width: 138px; padding-left: 42px; display: flex; gap: 16px; }
.lights i { width: 24px; height: 24px; border-radius: 50%; }
.red { background: #ec6a5e; }
.amber { background: #f4be50; }
.green { background: #61c554; }
.tab { position: relative; width: 421px; height: 100%; flex: none; display: flex; align-items: center; box-sizing: border-box; padding: 0 0 2px 20px; color: #b8d0d8; font-size: 24px; }
.tab::after { content: ''; position: absolute; right: 0; top: 22px; width: 3px; height: 32px; background: #30444c; border-radius: 2px; }
.tab.active::after, .tab.plainEnd::after { display: none; }
.tab.active { color: #e2e8eb; }
.tab > * { position: relative; }
.tab > .tabshape { position: absolute; left: 3px; width: 408px; top: 10px; bottom: 0; background: #2d3c43; border-radius: 20px 20px 0 0; }
.tabshape::before, .tabshape::after { content: ''; position: absolute; bottom: 0; width: 24px; height: 24px; }
.tabshape::before { left: -24px; background: radial-gradient(circle at 0 0, transparent 23.5px, #2d3c43 24px); }
.tabshape::after { right: -24px; background: radial-gradient(circle at 100% 0, transparent 23.5px, #2d3c43 24px); }
.fav { width: 32px; height: 32px; display: grid; place-items: center; }
.fav svg { width: 32px; height: 32px; }
.fav svg.gl { width: 28px; height: 28px; }
.cp { font: italic 800 29px Inter, sans-serif; fill: #ee7038; }
.pma { font: italic 800 13px Inter, sans-serif; fill: #8f95c8; }
.label { margin-left: 16px; width: 282px; overflow: hidden; white-space: nowrap; line-height: 34px; mask-image: linear-gradient(90deg, #000 0 246px, transparent 282px); }
.x { width: 18px; height: 18px; margin-left: 22px; stroke: #b8d0d8; }
.active .x { stroke: #e2e8eb; }
.plus { width: 22px; height: 22px; margin-left: 19px; }
.more { margin-left: auto; margin-right: 12px; width: 56px; height: 56px; border-radius: 20px; background: #2d3c43; display: grid; place-items: center; }
.more svg { width: 16px; }

.chrome { height: 160px; flex: none; background: #2d3c43; border-radius: 16px 16px 0 0; }
.nav { height: 92px; display: flex; align-items: center; padding-left: 30px; }
.n-back { width: 28px; height: 28px; }
.n-fwd { width: 28px; height: 28px; margin-left: 44px; }
.n-re { width: 28px; height: 28px; margin-left: 44px; }
.omni { margin-left: 38px; width: 2352px; height: 68px; box-sizing: border-box; border-radius: 34px; background: #18282d; display: flex; align-items: center; padding: 0 33px 0 11px; flex: none; color: #e2e7e9; }
.chip { width: 105px; height: 48px; border-radius: 24px; background: #2d3c43; display: flex; align-items: center; box-sizing: border-box; padding-left: 10px; gap: 11px; font-size: 24px; font-weight: 500; }
.chip svg { width: 26px; height: 26px; }
.url { font-size: 28px; margin-left: 15px; white-space: nowrap; }
.o-zoom { width: 28px; height: 28px; margin-left: auto; }
.o-star { width: 30px; height: 30px; margin-left: 35px; }
.n-ext { width: 34px; height: 34px; margin: -4px 0 0 36px; }
.n-sep { width: 3px; height: 32px; background: #46565d; margin-left: 35px; }
.n-dl { width: 32px; height: 42px; margin: 10px 0 0 36px; }
.avatar { width: 40px; height: 40px; border-radius: 50%; margin-left: 35px; background: radial-gradient(circle at 20% 65%, #5a4a4e 0, transparent 22%), radial-gradient(circle at 60% 10%, #4b4450 0, #2b2d3f 40%, #171d35 75%); }
.n-dots { width: 6px; height: 28px; margin-left: 49px; }
.marks { height: 56px; display: flex; align-items: center; padding-left: 26px; color: #c5c9cc; font-size: 24px; }
.apps { width: 28px; height: 28px; }
.m-sep { width: 3px; height: 32px; background: #46565d; margin: 0 28px 0 31px; }
.mark { display: flex; align-items: center; gap: 12px; white-space: nowrap; }
.mark svg { width: 32px; height: 32px; }

.pdfbar { height: 114px; flex: none; box-sizing: border-box; border-top: 2px solid #474747; background: #3c3c3c; display: flex; align-items: center; color: #f1f1f1; padding-right: 40px; }
.lead { width: 1059px; display: flex; align-items: center; box-sizing: border-box; padding-left: 50px; gap: 50px; font-size: 28px; font-weight: 600; flex: none; color: #fff; }
.lead svg { width: 28px; height: 20px; }
.field { height: 40px; line-height: 41px; background: #1e1e1e; text-align: center; font-size: 26px; font-weight: 500; letter-spacing: -0.6px; flex: none; }
.page { width: 52px; }
.zoom { width: 100px; }
.of { width: 99px; padding-left: 7px; font-size: 26px; box-sizing: border-box; flex: none; }
.of b { font-weight: 500; margin-left: 11px; }
.vr { width: 2px; height: 40px; background: #6c6c6c; }
.step { width: 79px; height: 48px; }
.tool { width: 48px; height: 48px; }
.fit { margin-left: 33px; }
.rot { margin-left: 15px; }
.v2 { margin-left: 33px; }
.pen { margin-left: 20px; }
.v3 { margin-left: 20px; }
.un { margin-left: 20px; }
.re { margin-left: 16px; }
.dl { margin-left: auto; }
.pr { margin-left: 23px; }
.dt { margin-left: 25px; }

.body { flex: 1; min-height: 0; display: flex; background: #282828; overflow: hidden; }
.side { width: 602px; flex: none; box-sizing: border-box; background: #28292b; border-right: 2px solid #606163; padding-top: 36px; display: flex; flex-direction: column; align-items: center; overflow: hidden; }
.thumb { height: 294px; flex: none; display: flex; flex-direction: column; align-items: center; }
.frame { padding: 12px; }
.on .frame { background: #95b3f5; }
.frame svg { width: 280px; height: 196px; overflow: hidden; }
.num { color: #fff; font-size: 26px; font-weight: 500; line-height: 32px; margin-top: 11px; }

.pages { padding-left: 8px; flex: none; width: 2322px; font-family: 'DejaVu Sans', sans-serif; color: #000; }
.sheet { position: relative; background: #fff; overflow: hidden; box-shadow: 0 2px 14px 4px rgba(0, 0, 0, 0.45); padding-left: 54px; }
.upper { height: 296px; margin-bottom: 20px; }
.lower { height: 1625px; }
.grid { display: grid; grid-template-columns: 46.5px repeat(18, 120.39px); width: 2213.6px; border-right: 1px solid #000; font-size: 17.52px; line-height: 21.93px; }
.cell { border-left: 1px solid #111; padding: 1.4px 0 0 5px; white-space: pre; box-sizing: border-box; min-width: 0; }
.right { text-align: right; padding-right: 5px; }
.tail { height: 227px; display: flex; flex-direction: column; justify-content: flex-end; }
.ln:last-child { margin-bottom: -1.8px; }
.first { height: 40px; border-top: 1.6px solid #000; }
.cont { height: 28px; border-top: 1.6px solid #000; }
.foot { position: absolute; font-size: 27.25px; line-height: 32px; white-space: nowrap; top: 270px; }
.mid { left: 920px; }
.end { right: 55px; }
.caption { margin: 0; padding-top: 1px; height: 58px; font-size: 23.36px; line-height: 28px; white-space: pre; box-sizing: border-box; }
.head { font-size: 23.36px; line-height: 29.2px; background: #c8c8c8; height: 88px; border-top: 1.6px solid #000; box-sizing: border-box; }
.head .cell { padding: 0.8px 0 0; text-align: center; border-left-color: #000; }
.long { height: 1480px; border-top: 1.6px solid #000; }

.dock { position: absolute; left: 195px; top: 1738px; width: 2551px; height: 164px; box-sizing: border-box; border-radius: 46px; border: 2px solid rgba(190, 190, 175, 0.5); background: linear-gradient(100deg, #6f6b61 0, #8b8b7d 18%, #918f82 35%, #92917f 52%, #7f796d 72%, #74706a 82%, #726d61 100%); box-shadow: 0 0 50px 8px rgba(0, 0, 0, 0.2); display: flex; padding: 21px 0 0 20px; }
.dock::before { content: ''; position: absolute; inset: 0; border-radius: 44px; background: linear-gradient(180deg, rgba(60, 62, 58, 0.14), rgba(170, 175, 150, 0.16)); }
.app { position: relative; width: 108px; height: 108px; margin-right: 34px; flex: none; }
.app svg { width: 108px; height: 108px; filter: drop-shadow(0 2px 2px rgba(0, 0, 0, 0.25)); }
.running::after { content: ''; position: absolute; left: 49px; top: 129px; width: 8px; height: 8px; border-radius: 50%; background: #15140c; }
.dsep { position: relative; width: 2px; height: 120px; margin: -1px 47px 0 15px; background: rgba(50, 48, 40, 0.6); }
.dsep ~ .dsep { margin-left: 13px; margin-right: 49px; }
.flower { isolation: isolate; }
.petal { mix-blend-mode: multiply; opacity: 0.92; }
.bin { margin-left: -3px; }
.badge { position: absolute; left: 65px; top: -13px; width: 60px; height: 52px; line-height: 53px; border-radius: 26px; background: #df4f40; color: #fff; font-size: 26px; text-align: center; letter-spacing: -0.5px; }
.off { font: 700 32px 'Open Sans', sans-serif; fill: #fff; text-anchor: middle; }
</style>
